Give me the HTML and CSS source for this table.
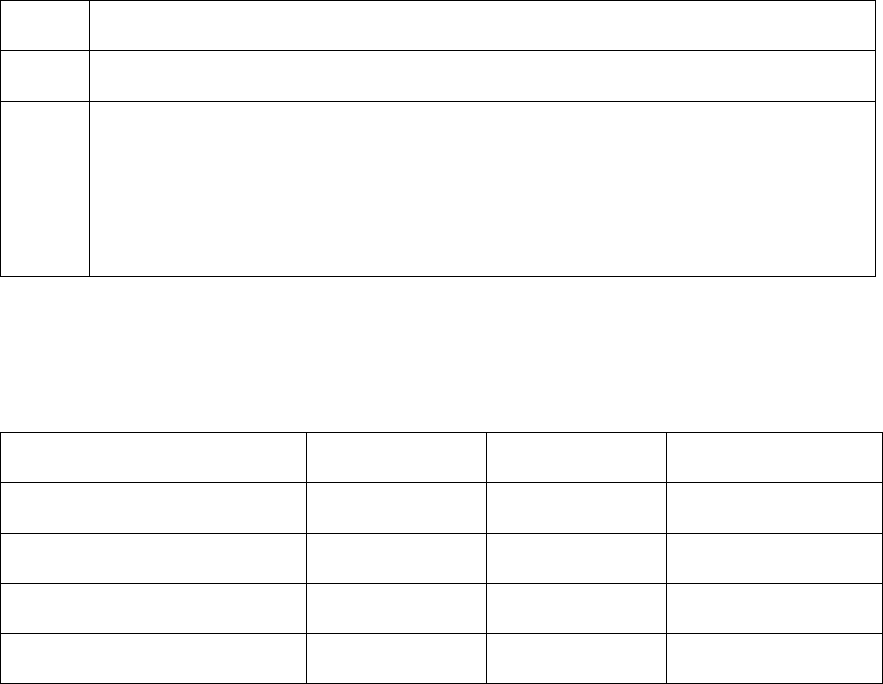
FILE: index.html
```html
<!DOCTYPE html>
<html>
<head>
<meta charset="utf-8">
<link rel="stylesheet" href="styles.css">
</head>
<body>
<table class="grid grid-top">
  <tbody>
    <tr class="r50"><td class="c-a"></td><td class="c-b"></td></tr>
    <tr class="r51"><td class="c-a"></td><td class="c-b"></td></tr>
    <tr class="r175"><td class="c-a"></td><td class="c-b"></td></tr>
  </tbody>
</table>
<table class="grid grid-bottom">
  <tbody>
    <tr class="r50"><td class="c1"></td><td class="c2"></td><td class="c3"></td><td class="c4"></td></tr>
    <tr class="r51"><td class="c1"></td><td class="c2"></td><td class="c3"></td><td class="c4"></td></tr>
    <tr class="r50"><td class="c1"></td><td class="c2"></td><td class="c3"></td><td class="c4"></td></tr>
    <tr class="r50"><td class="c1"></td><td class="c2"></td><td class="c3"></td><td class="c4"></td></tr>
    <tr class="r50"><td class="c1"></td><td class="c2"></td><td class="c3"></td><td class="c4"></td></tr>
  </tbody>
</table>
</body>
</html>
```
FILE: styles.css
```css
html, body {
  margin: 0;
  padding: 0;
  background: #ffffff;
  font-family: "Liberation Sans", Arial, sans-serif;
}

.grid {
  border-collapse: separate;
  border-spacing: 0;
  border-top: 1px solid #000;
  border-left: 1px solid #000;
  table-layout: fixed;
}

.grid td {
  padding: 0;
  border-right: 1px solid #000;
  border-bottom: 1px solid #000;
  box-sizing: border-box;
}

.grid-top {
  width: 876px;
}

.grid-bottom {
  width: 883px;
  margin-top: 155px;
}

.c-a { width: 89px; }
.c-b { width: 786px; }

.c1 { width: 306px; }
.c2 { width: 180px; }
.c3 { width: 180px; }
.c4 { width: 216px; }

.r50 td { height: 50px; }
.r51 td { height: 51px; }
.r175 td { height: 175px; }
```
